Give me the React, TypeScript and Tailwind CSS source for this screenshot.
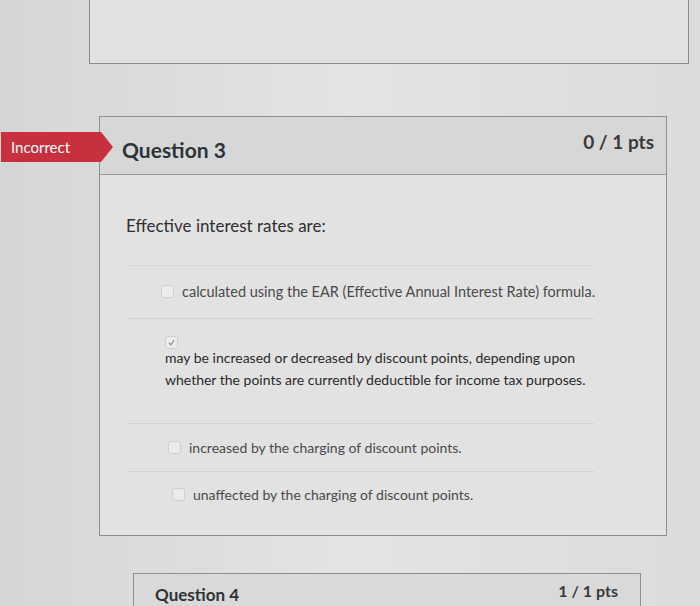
const font = { fontFamily: "Lato, 'Open Sans', sans-serif" };

function Box({ checked = false }: { checked?: boolean }) {
  return (
    <span className="flex size-[13px] shrink-0 items-center justify-center rounded-[3px] border border-[#cfcfcf] bg-[#ececec]">
      {checked ? (
        <svg viewBox="0 0 12 12" className="size-[9px]" fill="none" stroke="#8a8a8a" strokeWidth="1.6">
          <path d="M2.5 6.5 5 9l4.5-6" />
        </svg>
      ) : null}
    </span>
  );
}

function Answer({
  text,
  pad,
  height,
  size = "text-[14px]",
}: {
  text: string;
  pad: string;
  height: string;
  size?: string;
}) {
  return (
    <div className={`flex items-center gap-[8px] border-b border-[#d2d2d2] ${pad} ${height}`}>
      <Box />
      <span className={`whitespace-nowrap ${size} text-[#4a4a4a]`}>{text}</span>
    </div>
  );
}

export default function App() {
  return (
    <div
      className="relative h-[606px] w-[700px] overflow-hidden bg-gradient-to-r from-[#d6d6d6] via-[#e4e4e4] to-[#dcdcdc]"
      style={font}
    >
      <div className="ml-[89px] h-[64px] w-[600px] border border-t-0 border-[#8c8c8c] bg-[#e1e1e1]" />

      <section className="relative ml-[99px] mt-[52px] w-[568px] border border-[#8f8f8f] bg-[#e2e2e2]">
        <div className="absolute left-[-99px] top-[15px] flex h-[30px] items-center">
          <div className="flex h-[30px] w-[100px] items-center bg-[#c9303d] pl-[10px] text-[15px] text-white">
            Incorrect
          </div>
          <div className="h-0 w-0 border-y-[15px] border-l-[12px] border-y-transparent border-l-[#c9303d]" />
        </div>

        <header className="flex h-[58px] items-center justify-between border-b border-[#9a9a9a] bg-[#d7d7d7] pl-[22px] pr-[12px]">
          <h2 className="mt-[8px] text-[21px] font-bold text-[#2d3438]">Question 3</h2>
          <span className="mb-[6px] text-[19px] font-bold text-[#3a3a3a]">0 / 1 pts</span>
        </header>

        <div className="pb-[17px] pt-[38px]">
          <p className="pl-[26px] text-[17px] text-[#2f2f2f]">Effective interest rates are:</p>

          <div className="ml-[28px] mr-[72px] mt-[26px] border-t border-[#d6d6d6]">
            <Answer
              text="calculated using the EAR (Effective Annual Interest Rate) formula."
              pad="pl-[33px]"
              height="h-[53px]"
              size="text-[14.5px]"
            />
            <div className="h-[105px] border-b border-[#d2d2d2] pl-[37px] pt-[17px]">
              <Box checked />
              <p className="mt-[-2px] text-[14px] leading-[22px] text-[#2a2a2a]">
                may be increased or decreased by discount points, depending upon
                <br />
                whether the points are currently deductible for income tax purposes.
              </p>
            </div>
            <Answer
              text="increased by the charging of discount points."
              pad="pl-[40px]"
              height="h-[48px]"
            />
            <div className="flex h-[46px] items-center gap-[8px] pl-[44px]">
              <Box />
              <span className="text-[14px] text-[#4a4a4a]">
                unaffected by the charging of discount points.
              </span>
            </div>
          </div>
        </div>
      </section>

      <section className="ml-[133px] mt-[37px] w-[508px] border border-[#8f8f8f] bg-[#d9d9d9]">
        <header className="flex h-[40px] items-end justify-between pl-[21px] pr-[22px]">
          <h2 className="mb-[6px] text-[17px] font-bold text-[#2d3438]">Question 4</h2>
          <span className="mb-[11px] text-[16px] font-bold text-[#3a3a3a]">1 / 1 pts</span>
        </header>
      </section>
    </div>
  );
}
